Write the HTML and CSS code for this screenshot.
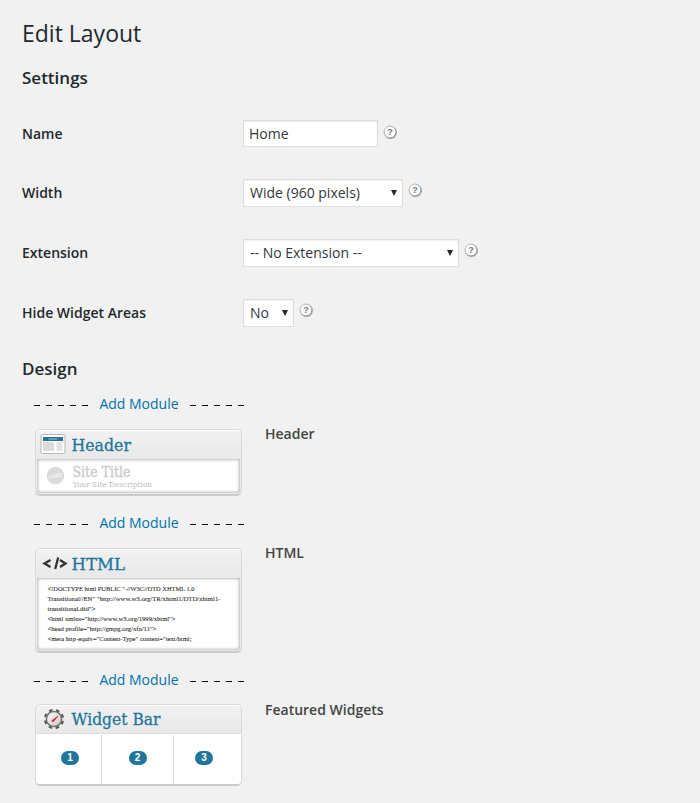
FILE: index.html
```html
<!DOCTYPE html>
<html lang="en">
<head>
<meta charset="utf-8">
<title>Edit Layout</title>
<link rel="stylesheet" href="styles.css">
</head>
<body>
<svg width="0" height="0" class="defs">
  <defs>
    <linearGradient id="helpEdge" x1="0" y1="0" x2="1" y2="1"><stop offset="0" stop-color="#c8c8c8"/><stop offset="1" stop-color="#777"/></linearGradient>
    <linearGradient id="dial" x1="0" y1="0" x2="1" y2="1"><stop offset="0" stop-color="#fff"/><stop offset="1" stop-color="#c4c4c4"/></linearGradient>
    <symbol id="help" viewBox="0 0 15 15">
      <circle cx="7.7" cy="7.8" r="6.4" fill="#999" opacity=".6"/>
      <circle cx="7" cy="7" r="6" fill="#fbfbfb" stroke="url(#helpEdge)"/>
      <text x="7" y="10.2" text-anchor="middle" class="help-mark">?</text>
    </symbol>
  </defs>
</svg>
<main class="wrap">
  <h1>Edit Layout</h1>
  <h2>Settings</h2>
  <div class="row"><label for="name" class="low-label">Name</label><input id="name" class="control name" type="text" value="Home"><svg class="help low"><use href="#help"/></svg></div>
  <div class="row"><label for="width">Width</label><span class="pick width"><select id="width" class="control"><option>Wide (960 pixels)</option></select></span><svg class="help"><use href="#help"/></svg></div>
  <div class="row"><label for="ext">Extension</label><span class="pick ext"><select id="ext" class="control"><option>-- No Extension --</option></select></span><svg class="help"><use href="#help"/></svg></div>
  <div class="row"><label for="hide">Hide Widget Areas</label><span class="pick hide"><select id="hide" class="control"><option>No</option></select></span><svg class="help"><use href="#help"/></svg></div>
  <h2 class="design">Design</h2>

  <section class="module">
    <div class="add"><i class="dash"></i><a>Add Module</a><i class="dash"></i></div>
    <div class="card header-card">
      <svg class="bar" viewBox="0 1 205 27">
        <rect x="5" y="4.500" width="24" height="19" rx="1.500" fill="#fff" stroke="#b5b5b5"/>
        <rect x="7" y="7" width="20" height="4" fill="#21759b"/>
        <rect x="12.500" y="8.500" width="9" height="1" fill="#9fc6d8"/>
        <rect x="7" y="12" width="11" height="9" fill="#dcdcdc"/><rect x="20.500" y="12" width="6" height="9" fill="#e4e4e4"/>
        <text x="35.500" y="20.700" textLength="59.500" lengthAdjust="spacingAndGlyphs" class="title">Header</text>
      </svg>
      <svg class="inner site" viewBox="0 0 203 34">
        <circle cx="18.500" cy="16.500" r="8.700" fill="#dadada"/>
        <text x="12" y="18.500" textLength="13" lengthAdjust="spacingAndGlyphs" class="logo" transform="rotate(-10 18.500 17)">LOGO</text>
        <text x="35.500" y="17.500" textLength="58" lengthAdjust="spacingAndGlyphs" class="site-title">Site Title</text>
        <text x="36" y="27.500" textLength="79" lengthAdjust="spacingAndGlyphs" class="site-desc">Your Site Description</text>
      </svg>
    </div>
    <strong>Header</strong>
  </section>

  <section class="module">
    <div class="add"><i class="dash"></i><a>Add Module</a><i class="dash"></i></div>
    <div class="card html-card">
      <svg class="bar" viewBox="0 1 205 27">
        <path d="M14.500 11 8.500 14.500l6 3.500M24 11l5.500 3.500-5.500 3.500M22.200 8.500 19.200 20" fill="none" stroke="#333" stroke-width="2.300"/>
        <text x="35.500" y="20.500" textLength="53.500" lengthAdjust="spacingAndGlyphs" class="title">HTML</text>
      </svg>
      <svg class="inner code" viewBox="0 0 203 72">
        <text x="10.500" y="13" textLength="147" lengthAdjust="spacingAndGlyphs">&lt;!DOCTYPE html PUBLIC "-//W3C//DTD XHTML 1.0</text>
        <text x="10.500" y="23" textLength="173" lengthAdjust="spacingAndGlyphs">Transitional//EN" "http://www.w3.org/TR/xhtml1/DTD/xhtml1-</text>
        <text x="10.500" y="33" textLength="48" lengthAdjust="spacingAndGlyphs">transitional.dtd"&gt;</text>
        <text x="10.500" y="43" textLength="128" lengthAdjust="spacingAndGlyphs">&lt;html xmlns="http://www.w3.org/1999/xhtml"&gt;</text>
        <text x="10.500" y="53" textLength="109" lengthAdjust="spacingAndGlyphs">&lt;head profile="http://gmpg.org/xfn/11"&gt;</text>
        <text x="10.500" y="63" textLength="144" lengthAdjust="spacingAndGlyphs">&lt;meta http-equiv="Content-Type" content="text/html;</text>
      </svg>
    </div>
    <strong>HTML</strong>
  </section>

  <section class="module">
    <div class="add"><i class="dash"></i><a>Add Module</a><i class="dash"></i></div>
    <div class="card widget-card">
      <svg class="bar" viewBox="0 1 205 27">
        <circle cx="18" cy="14" r="8.800" fill="none" stroke="#555" stroke-width="2.600" stroke-dasharray="3.456 3.456" stroke-dashoffset="-1.728"/>
        <circle cx="18" cy="14" r="7.600" fill="url(#dial)" stroke="#777" stroke-width="1.500"/>
        <path d="M15.500 16l6.500-5-4.500 5.500z" fill="#d22" stroke="#d22" stroke-width=".7"/>
        <text x="35.500" y="20" textLength="89" lengthAdjust="spacingAndGlyphs" class="title">Widget Bar</text>
      </svg>
      <div class="slots"><div><b>1</b></div><div><b>2</b></div><div><b>3</b></div></div>
    </div>
    <strong>Featured Widgets</strong>
  </section>
</main>
</body>
</html>
```
FILE: styles.css
```css
* { box-sizing: border-box; }
body { margin: 0; background: #f1f1f1; color: #23282d; font: 14px/20px "Open Sans", sans-serif; }
.defs { position: absolute; }
.wrap { padding: 17px 22px 0; height: 803px; overflow: hidden; }
h1 { margin: 0; height: 49px; font-size: 23px; line-height: 33px; font-weight: 400; }
h2 { margin: 0; height: 37px; font-size: 17px; line-height: 24px; font-weight: 600; }
h2.design { height: 51px; padding-top: 14px; }
.row { display: flex; align-items: center; height: 60px; }
.row label { width: 221px; font-weight: 600; }
.row .low-label { padding-top: 2px; }
.control { font: 14px/20px "Open Sans", sans-serif; color: #32373c; background: #fff; border: 1px solid #ddd; border-radius: 0; box-shadow: inset 0 1px 2px rgba(0, 0, 0, .07); margin: 0; outline: 0; appearance: none; }
.name { width: 135px; height: 27px; padding: 3px 5px; }
.pick { position: relative; height: 28px; }
.pick select { width: 100%; height: 28px; padding: 2px 6px; display: block; }
.pick::after { content: ""; position: absolute; right: 6px; top: 11px; border: 3.500px solid transparent; border-top: 6px solid #23282d; border-bottom: 0; }
.width { width: 160px; }
.ext { width: 216px; }
.hide { width: 51px; }
.help { width: 15px; height: 15px; margin: 0 0 5px 5px; }
.help.low { margin-bottom: 2px; }
.help-mark { font: bold 9px "Liberation Sans", sans-serif; fill: #777; }

.module { display: grid; grid-template-columns: 231px 1fr; grid-template-rows: 35px auto; padding-left: 12px; margin-bottom: 17px; }
.add { grid-column: 1 / 3; display: flex; width: 210px; height: 20px; justify-content: space-between; }
.add a { color: #0073aa; width: 81px; text-align: center; white-space: nowrap; }
.dash { width: 54px; height: 1px; margin-top: 11px; background: repeating-linear-gradient(90deg, #000 0 6px, transparent 6px 12px); }
.module strong { font-weight: 600; color: #444; margin-top: -5px; }
.card { width: 207px; margin-left: 1px; border: 1px solid #dadada; border-bottom: 2px solid #cbcbcb; border-radius: 5px; background: #e9e9e9; overflow: hidden; }
.bar { display: block; width: 205px; height: 28px; background: linear-gradient(#f1f1f1, #e9e9e9); border-top: 1px solid #fff; }
.title { font: 17.5px "DejaVu Serif", serif; fill: #21759b; stroke: #21759b; stroke-width: .3px; }
.inner { display: block; width: 203px; margin: 1px; background: #fff; border-radius: 0 0 3px 3px; box-shadow: inset 0 0 3px 1px #bbb; }
.header-card { height: 67px; }
.site { height: 34px; }
.html-card { height: 105px; }
.code { height: 72px; }
.code text { font: 6.3px "Liberation Serif", serif; fill: #333; stroke: #333; stroke-width: .1px; }
.logo { font: bold 5px "Liberation Sans", sans-serif; fill: #fff; }
.site-title { font: 14px "DejaVu Serif", serif; fill: #ccc; stroke: #ccc; stroke-width: .4px; }
.site-desc { font: 8px "DejaVu Serif", serif; fill: #bbb; }
.widget-card { height: 82px; margin-top: -1px; }
.slots { display: grid; grid-template-columns: 66px 72px 67px; height: 51px; background: #fff; border-top: 1px solid #ddd; }
.slots div { display: flex; align-items: center; justify-content: center; border-right: 1px solid #ddd; margin-top: 1px; padding-bottom: 3px; }
.slots div:first-child { padding-left: 3px; }
.slots div:last-child { border: 0; padding-right: 7px; }
.slots b { width: 18px; height: 14px; border-radius: 7px; background: #21759b; color: #fff; font: bold 10px/14px "Liberation Sans", sans-serif; text-align: center; }
```
